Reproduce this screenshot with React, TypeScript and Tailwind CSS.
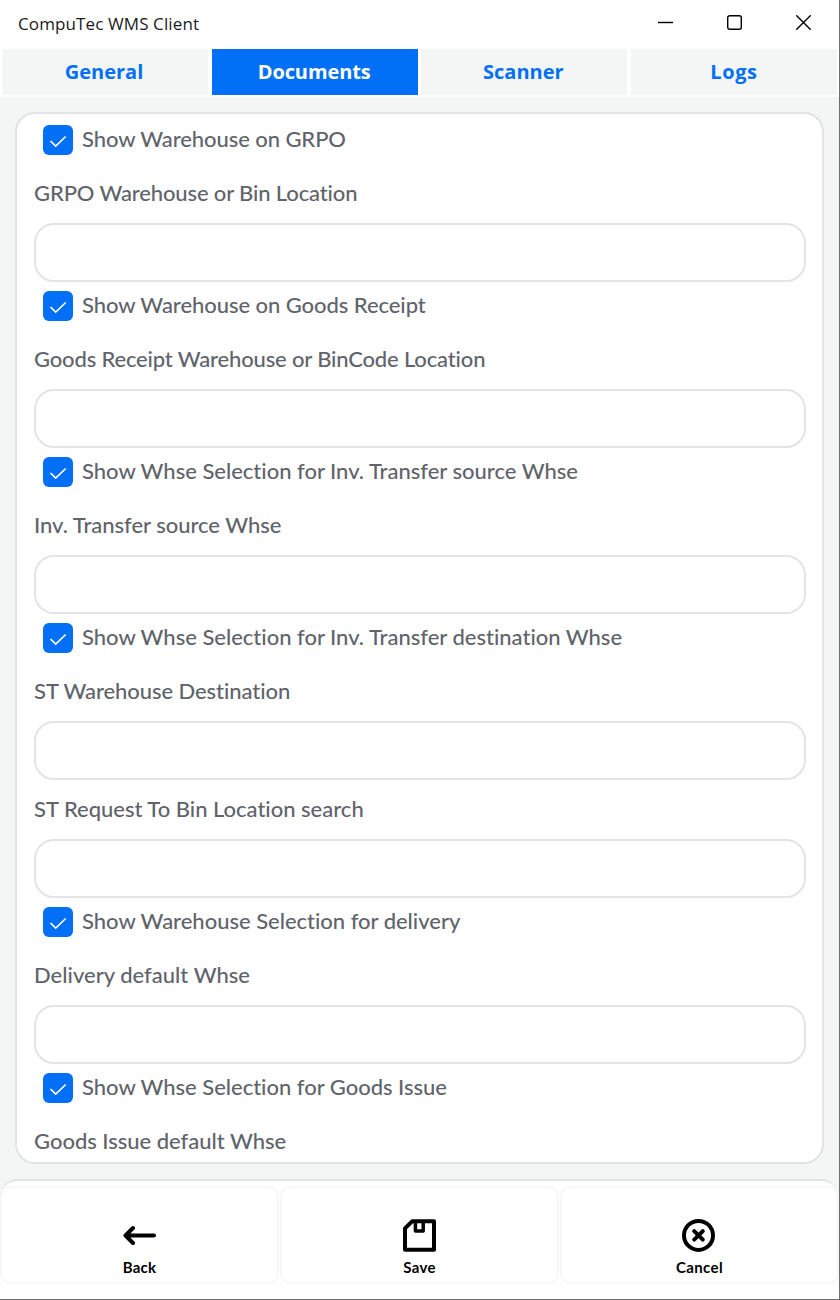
import type { ReactNode } from "react";

type Tab = { label: string; tracking: string };
type Field = { check?: string; checkTracking?: string; label: string; labelTracking: string; last?: boolean };

const tabs: Tab[] = [
  { label: "General", tracking: "tracking-[0px] pr-[2px]" },
  { label: "Documents", tracking: "tracking-[-0.1px] pr-px" },
  { label: "Scanner", tracking: "tracking-[0px] pr-[2px]" },
  { label: "Logs", tracking: "tracking-[0.6px]" },
];

const fields: Field[] = [
  { check: "Show Warehouse on GRPO", checkTracking: "tracking-[-0.08px]", label: "GRPO Warehouse or Bin Location", labelTracking: "tracking-[-0.14px]" },
  { check: "Show Warehouse on Goods Receipt", checkTracking: "tracking-[-0.06px]", label: "Goods Receipt Warehouse or BinCode Location", labelTracking: "tracking-[-0.16px]" },
  { check: "Show Whse Selection for Inv. Transfer source Whse", checkTracking: "tracking-[-0.01px]", label: "Inv. Transfer source Whse", labelTracking: "tracking-[-0.03px]" },
  { check: "Show Whse Selection for Inv. Transfer destination Whse", checkTracking: "tracking-[-0.01px]", label: "ST Warehouse Destination", labelTracking: "tracking-[-0.07px]" },
  { label: "ST Request To Bin Location search", labelTracking: "tracking-[-0.01px]" },
  { check: "Show Warehouse Selection for delivery", checkTracking: "tracking-[-0.02px]", label: "Delivery default Whse", labelTracking: "tracking-[0.01px]" },
  { check: "Show Whse Selection for Goods Issue", checkTracking: "tracking-[-0.02px]", label: "Goods Issue default Whse", labelTracking: "tracking-[-0.02px]", last: true },
];

function TitleBar() {
  return (
    <header className="flex h-[49px] shrink-0 items-center bg-white pl-[18px] pr-[28px]">
      <h1 className="flex-1 pb-px font-['Open_Sans','Noto_Sans',sans-serif] text-[17px] tracking-[0.11px] text-[#1b1b1b]">CompuTec WMS Client</h1>
      <div className="flex gap-[54px] pb-[4px] text-black">
        <svg width="15" height="15" viewBox="0 0 15 15" fill="none" stroke="currentColor" strokeWidth="1.4"><path d="M0 7.5H15" /></svg>
        <svg width="15" height="15" viewBox="0 0 15 15" fill="none" stroke="currentColor" strokeWidth="1.4"><rect x="0.7" y="0.7" width="13.6" height="13.6" rx="2" /></svg>
        <svg width="15" height="15" viewBox="0 0 15 15" fill="none" stroke="currentColor" strokeWidth="1.4"><path d="M0.3 0.3L14.7 14.7M14.7 0.3L0.3 14.7" /></svg>
      </div>
    </header>
  );
}

function FieldGroup({ field }: { field: Field }) {
  return (
    <div className="shrink-0">
      {field.check && (
        <label className="flex h-12 items-center gap-[9px] pl-[9px]">
          <span className="flex size-[30px] shrink-0 items-center justify-center rounded-[6px] bg-[#0270f6] text-white">
            <svg width="18" height="18" viewBox="0 0 18 18" fill="none" stroke="currentColor" strokeWidth="1.7"><path d="M1.5 10L6.7 15.1L16.7 5.5" /></svg>
          </span>
          <span className={`pb-[2px] whitespace-nowrap ${field.checkTracking}`}>{field.check}</span>
        </label>
      )}
      <div className={`flex h-[59px] items-center pb-[2px] whitespace-nowrap ${field.labelTracking}`}>{field.label}</div>
      {!field.last && <div className="h-[59px] rounded-[20px] border-2 border-[#e4e4e4] bg-white" />}
    </div>
  );
}

function Action({ label, children, tracking }: { label: string; children: ReactNode; tracking: string }) {
  return (
    <button className="flex h-[98px] flex-col items-center rounded-[10px] border-2 border-[#f6f7f7] bg-white pt-[30px] text-black">
      {children}
      <span className={`mt-[5px] text-[15px] leading-[20px] font-bold ${tracking}`}>{label}</span>
    </button>
  );
}

export default function App() {
  return (
    <div className="flex h-[1300px] w-[840px] flex-col overflow-hidden border-r border-b border-[#6f6f6f] bg-white font-['Lato','Open_Sans',sans-serif]">
      <TitleBar />
      <nav className="grid h-12 shrink-0 grid-cols-4 gap-[3.67px] border-b-2 border-white pr-[2px] pl-[2px]">
        {tabs.map((tab) => (
          <button
            key={tab.label}
            className={`pb-px font-['Open_Sans','Noto_Sans',sans-serif] text-[20px] font-bold ${tab.tracking} ${tab.label === "Documents" ? "bg-[#0270f6] text-white" : "bg-[#f4f6f6] text-[#0270f6]"}`}
          >
            {tab.label}
          </button>
        ))}
      </nav>
      <div className="shrink-0 bg-[#f4f6f6]">
        <main className="h-[1082px] px-[15px] pt-[15px] pb-[15px]">
          <div className="flex h-[1052px] flex-col overflow-hidden rounded-[20px] border-2 border-[#e2e3e3] bg-white pr-[16px] pl-[17px] pt-[2px] text-[22px] leading-[30px] font-medium text-[#5f646b] [font-variant-ligatures:none]">
            {fields.map((field) => (
              <FieldGroup key={field.label} field={field} />
            ))}
          </div>
        </main>
        <footer className="h-[120px] rounded-t-[18px] border-t-2 border-[#e2e3e3] bg-white pt-[5px]">
          <div className="grid grid-cols-3 gap-px">
            <Action label="Back" tracking="tracking-[0.2px]">
              <svg width="33" height="34" viewBox="0 0 33 34" fill="none" stroke="currentColor" strokeWidth="4" strokeLinecap="round" strokeLinejoin="round"><path d="M31 17.5H2.5M10 10L2.5 17.5L10 25" /></svg>
            </Action>
            <Action label="Save" tracking="tracking-[0.3px]">
              <svg width="33" height="34" viewBox="0 0 33 34" fill="none" stroke="currentColor" strokeWidth="4" strokeLinejoin="round"><path d="M9.3 3.2H31V31.7H2V10.4Z" /><path d="M12.4 3.2V12.9H20.2V3.2" strokeWidth="3.5" /></svg>
            </Action>
            <Action label="Cancel" tracking="tracking-[0.4px]">
              <svg className="overflow-visible" width="33" height="34" viewBox="0 0 33 34" fill="none" stroke="currentColor" strokeWidth="4" strokeLinecap="round"><circle cx="15.5" cy="17.4" r="14.5" /><path d="M11.2 13.1L19.8 21.7M19.8 13.1L11.2 21.7" /></svg>
            </Action>
          </div>
        </footer>
      </div>
    </div>
  );
}
